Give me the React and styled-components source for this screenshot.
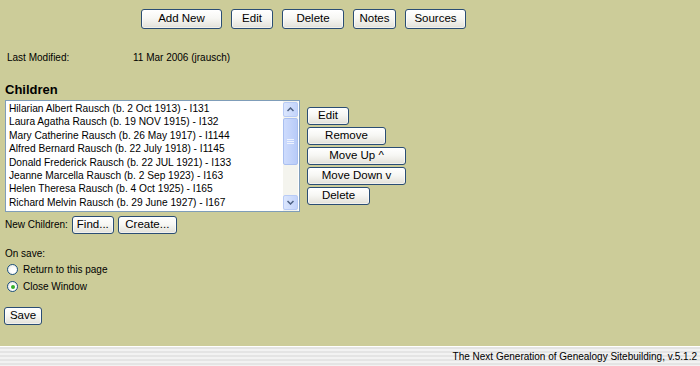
import React from "react";
import styled, { createGlobalStyle } from "styled-components";

const Global = createGlobalStyle`
  html, body { margin: 0; padding: 0; }
  body {
    background: #cccc99;
    font-family: "Liberation Sans", Arial, sans-serif;
    color: #000;
  }
`;

const Page = styled.div`
  min-height: 366px;
  display: flex;
  flex-direction: column;
`;

const Main = styled.div`
  flex: 1;
  padding: 9px 0 0 0;
`;

const Btn = styled.button`
  box-sizing: border-box;
  width: ${(p) => p.$w}px;
  height: ${(p) => p.$h || 18}px;
  padding: 0;
  margin: 0;
  font-family: "Liberation Sans", Arial, sans-serif;
  font-size: 11.5px;
  color: #000;
  border: 1px solid #2a4d74;
  border-radius: 3px;
  background: linear-gradient(#ffffff 0%, #f7f7f4 45%, #e6e5de 90%, #d6d4cb 100%);
  box-shadow: inset 0 0 0 1px rgba(255, 255, 255, 0.6);
  display: inline-flex;
  align-items: center;
  justify-content: center;
  cursor: pointer;
  line-height: 1;
  flex-shrink: 0;
`;

const TopBar = styled.div`
  display: flex;
  gap: 9px;
  padding-left: 141px;
`;

const MetaRow = styled.div`
  display: flex;
  font-size: 10px;
  margin-top: 23px;
  padding-left: 7px;
  line-height: 12px;
`;

const MetaLabel = styled.span`
  width: 126px;
`;

const Heading = styled.h3`
  margin: 18px 0 0 5px;
  font-size: 13px;
  font-weight: bold;
  line-height: 16px;
`;

const ChildrenRow = styled.div`
  display: flex;
  align-items: flex-start;
  margin-top: 2px;
  padding-left: 5px;
  gap: 7px;
`;

const ListBox = styled.div`
  box-sizing: border-box;
  width: 295px;
  height: 112px;
  border: 1px solid #7f9db9;
  background: #fff;
  display: flex;
`;

const ListItems = styled.div`
  flex: 1;
  overflow: hidden;
  padding: 1px 0 0 3px;
`;

const Item = styled.div`
  font-size: 10.2px;
  line-height: 13.4px;
  white-space: nowrap;
`;

const Scroll = styled.div`
  width: 15px;
  display: flex;
  flex-direction: column;
  background: #f4f4ee;
  padding: 1px 0 1px 0;
  box-sizing: border-box;
  margin-right: 1px;
`;

const ScrollBtn = styled.div`
  height: 15px;
  border: 1px solid #b8cbf6;
  border-radius: 2px;
  background: linear-gradient(90deg, #dbe6fd, #c3d4fb);
  display: flex;
  align-items: center;
  justify-content: center;
  box-sizing: border-box;
`;

const Thumb = styled.div`
  height: 47px;
  margin-top: 1px;
  border: 1px solid #a9bff0;
  border-radius: 2px;
  background: linear-gradient(90deg, #cedcfd, #b8cbf8);
  display: flex;
  align-items: center;
  justify-content: center;
  box-sizing: border-box;
`;

const Track = styled.div`
  flex: 1;
`;

const SideButtons = styled.div`
  display: flex;
  flex-direction: column;
  gap: 2px;
  margin-top: 7px;
`;

const NewRow = styled.div`
  display: flex;
  align-items: center;
  margin-top: 4px;
  padding-left: 5px;
  font-size: 10px;
  line-height: 12px;
  gap: 4px;
`;

const NewLabel = styled.span`
  white-space: nowrap;
`;

const OnSave = styled.div`
  font-size: 10px;
  margin: 14px 0 0 5px;
  line-height: 12px;
`;

const RadioGroup = styled.div`
  margin-top: 1px;
`;

const RadioRow = styled.label`
  display: flex;
  align-items: center;
  font-size: 10px;
  margin-left: 7px;
  height: 17px;
  gap: 5px;
`;

const RadioDot = styled.span`
  box-sizing: border-box;
  width: 11px;
  height: 11px;
  border-radius: 50%;
  border: 1px solid #1c5180;
  background: radial-gradient(circle at 60% 60%, #ffffff 30%, #e2e2da 100%);
  display: flex;
  align-items: center;
  justify-content: center;
  &::after {
    content: "";
    width: 4px;
    height: 4px;
    border-radius: 50%;
    background: ${(p) => (p.$checked ? "#35b02a" : "transparent")};
  }
`;

const SaveWrap = styled.div`
  margin: 10px 0 0 4px;
`;

const Footer = styled.div`
  height: 20px;
  border-top: 1px solid #ffffff;
  box-sizing: border-box;
  background: repeating-linear-gradient(
    180deg,
    #e4e4e4 0px,
    #e4e4e4 2px,
    #f2f2f2 2px,
    #f2f2f2 4px
  );
  display: flex;
  justify-content: flex-end;
  align-items: center;
  padding-right: 3px;
  font-size: 10px;
`;

const Arrow = ({ up }) => (
  <svg width="7" height="5" viewBox="0 0 7 5">
    <path
      d={up ? "M0.5 4 L3.5 1 L6.5 4" : "M0.5 1 L3.5 4 L6.5 1"}
      fill="none"
      stroke="#4d6185"
      strokeWidth="1.5"
    />
  </svg>
);

const Grip = () => (
  <svg width="7" height="7" viewBox="0 0 7 7">
    <path d="M0 1.5 H7 M0 3.5 H7 M0 5.5 H7" stroke="#eef3fe" strokeWidth="1" />
  </svg>
);

const children = [
  "Hilarian Albert Rausch (b. 2 Oct 1913) - I131",
  "Laura Agatha Rausch (b. 19 NOV 1915) - I132",
  "Mary Catherine Rausch (b. 26 May 1917) - I1144",
  "Alfred Bernard Rausch (b. 22 July 1918) - I1145",
  "Donald Frederick Rausch (b. 22 JUL 1921) - I133",
  "Jeanne Marcella Rausch (b. 2 Sep 1923) - I163",
  "Helen Theresa Rausch (b. 4 Oct 1925) - I165",
  "Richard Melvin Rausch (b. 29 June 1927) - I167",
];

export default function App() {
  return (
    <Page>
      <Global />
      <Main>
        <TopBar>
          <Btn $w={81} $h={20}>Add New</Btn>
          <Btn $w={42} $h={20}>Edit</Btn>
          <Btn $w={62} $h={20}>Delete</Btn>
          <Btn $w={43} $h={20}>Notes</Btn>
          <Btn $w={61} $h={20}>Sources</Btn>
        </TopBar>
        <MetaRow>
          <MetaLabel>Last Modified:</MetaLabel>
          <span>11 Mar 2006 (jrausch)</span>
        </MetaRow>
        <Heading>Children</Heading>
        <ChildrenRow>
          <ListBox>
            <ListItems>
              {children.map((c) => (
                <Item key={c}>{c}</Item>
              ))}
            </ListItems>
            <Scroll>
              <ScrollBtn><Arrow up /></ScrollBtn>
              <Thumb><Grip /></Thumb>
              <Track />
              <ScrollBtn><Arrow /></ScrollBtn>
            </Scroll>
          </ListBox>
          <SideButtons>
            <Btn $w={42}>Edit</Btn>
            <Btn $w={79}>Remove</Btn>
            <Btn $w={99}>Move Up ^</Btn>
            <Btn $w={99}>Move Down v</Btn>
            <Btn $w={63}>Delete</Btn>
          </SideButtons>
        </ChildrenRow>
        <NewRow>
          <NewLabel>New Children:</NewLabel>
          <Btn $w={42}>Find...</Btn>
          <Btn $w={59}>Create...</Btn>
        </NewRow>
        <OnSave>On save:</OnSave>
        <RadioGroup>
          <RadioRow>
            <RadioDot />
            Return to this page
          </RadioRow>
          <RadioRow>
            <RadioDot $checked />
            Close Window
          </RadioRow>
        </RadioGroup>
        <SaveWrap>
          <Btn $w={38}>Save</Btn>
        </SaveWrap>
      </Main>
      <Footer>The Next Generation of Genealogy Sitebuilding, v.5.1.2</Footer>
    </Page>
  );
}
